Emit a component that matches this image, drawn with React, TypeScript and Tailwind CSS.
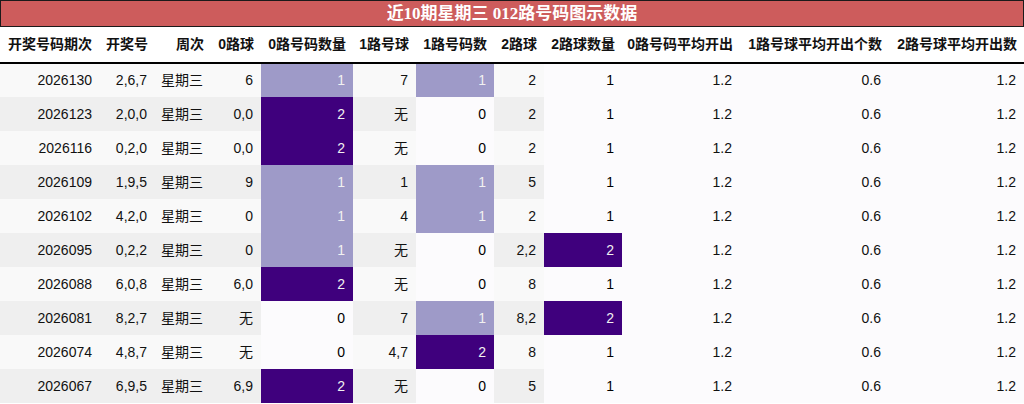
import React from "react";

type Row = [string, string, string, number, string, number, string, number, number];

const rows: Row[] = [
  ["2026130", "2,6,7", "6", 1, "7", 1, "2", 1, 0],
  ["2026123", "2,0,0", "0,0", 2, "无", 0, "2", 1, 1],
  ["2026116", "0,2,0", "0,0", 2, "无", 0, "2", 1, 2],
  ["2026109", "1,9,5", "9", 1, "1", 1, "5", 1, 3],
  ["2026102", "4,2,0", "0", 1, "4", 1, "2", 1, 4],
  ["2026095", "0,2,2", "0", 1, "无", 0, "2,2", 2, 5],
  ["2026088", "6,0,8", "6,0", 2, "无", 0, "8", 1, 6],
  ["2026081", "8,2,7", "无", 0, "7", 1, "8,2", 2, 7],
  ["2026074", "4,8,7", "无", 0, "4,7", 2, "8", 1, 8],
  ["2026067", "6,9,5", "6,9", 2, "无", 0, "5", 1, 9],
];

const headers = [
  "开奖号码期次",
  "开奖号",
  "周次",
  "0路球",
  "0路号码数量",
  "1路号球",
  "1路号码数",
  "2路球",
  "2路球数量",
  "0路号码平均开出",
  "1路号球平均开出个数",
  "2路号球平均开出数",
];

const widths = [
  "w-[100px]",
  "w-[55px]",
  "w-[56px]",
  "w-[50px]",
  "w-[92px]",
  "w-[63px]",
  "w-[78px]",
  "w-[50px]",
  "w-[78px]",
  "w-[118px]",
  "w-[149px]",
  "w-[135px]",
];

function grad3(v: number) {
  if (v === 2) return "bg-[#3f007d] text-[#f1f1f1]";
  if (v === 1) return "bg-[#9e9ac8] text-[#f1f1f1]";
  return "bg-[#fcfbfd] text-[#000000]";
}
function grad2(v: number) {
  if (v === 2) return "bg-[#3f007d] text-[#f1f1f1]";
  return "bg-[#fcfbfd] text-[#000000]";
}

export default function App() {
  return (
    <div
      className="w-[1024px] h-[404px] bg-white overflow-hidden"
      style={{ fontFamily: '"Liberation Sans", Arial, "Noto Sans CJK SC", sans-serif' }}
    >
      <div className="h-[27px] border border-[#1a1a1a] bg-[#cd5c5c] flex items-center justify-center text-white font-bold text-[17px] leading-none">
        <span style={{ fontFamily: '"Liberation Serif", "Noto Sans CJK SC", serif' }}>
          近10期星期三 012路号码图示数据
        </span>
      </div>
      <table className="table-fixed border-collapse w-[1024px] text-[14px] text-[#111] whitespace-nowrap">
        <colgroup>
          {widths.map((w, i) => (
            <col key={i} className={w} />
          ))}
        </colgroup>
        <thead>
          <tr className="h-[36px] border-b-2 border-black bg-white">
            {headers.map((h, i) => (
              <th
                key={i}
                className={`font-bold pr-[7px] pl-0 whitespace-nowrap ${i === 0 ? "text-left pl-[8px]" : "text-right"}`}
              >
                {h}
              </th>
            ))}
          </tr>
        </thead>
        <tbody>
          {rows.map((r, i) => {
            const stripe = i % 2 === 0 ? "bg-[#f9f9f9]" : "bg-[#efefef]";
            return (
              <tr key={i} className="h-[34px]">
                <td className={`pr-[8px] text-right ${stripe}`}>{r[0]}</td>
                <td className={`pr-[8px] text-right ${stripe}`}>{r[1]}</td>
                <td className={`pr-[8px] text-right ${stripe}`}>星期三</td>
                <td className={`pr-[8px] text-right ${stripe}`}>{r[2]}</td>
                <td className={`pr-[8px] text-right ${grad3(r[3])}`}>{r[3]}</td>
                <td className={`pr-[8px] text-right ${stripe}`}>{r[4]}</td>
                <td className={`pr-[8px] text-right ${grad3(r[5])}`}>{r[5]}</td>
                <td className={`pr-[8px] text-right ${stripe}`}>{r[6]}</td>
                <td className={`pr-[8px] text-right ${grad2(r[7])}`}>{r[7]}</td>
                <td className="pr-[8px] text-right bg-[#fcfbfd]">1.2</td>
                <td className="pr-[8px] text-right bg-[#fcfbfd]">0.6</td>
                <td className="pr-[8px] text-right bg-[#fcfbfd]">1.2</td>
              </tr>
            );
          })}
        </tbody>
      </table>
    </div>
  );
}
